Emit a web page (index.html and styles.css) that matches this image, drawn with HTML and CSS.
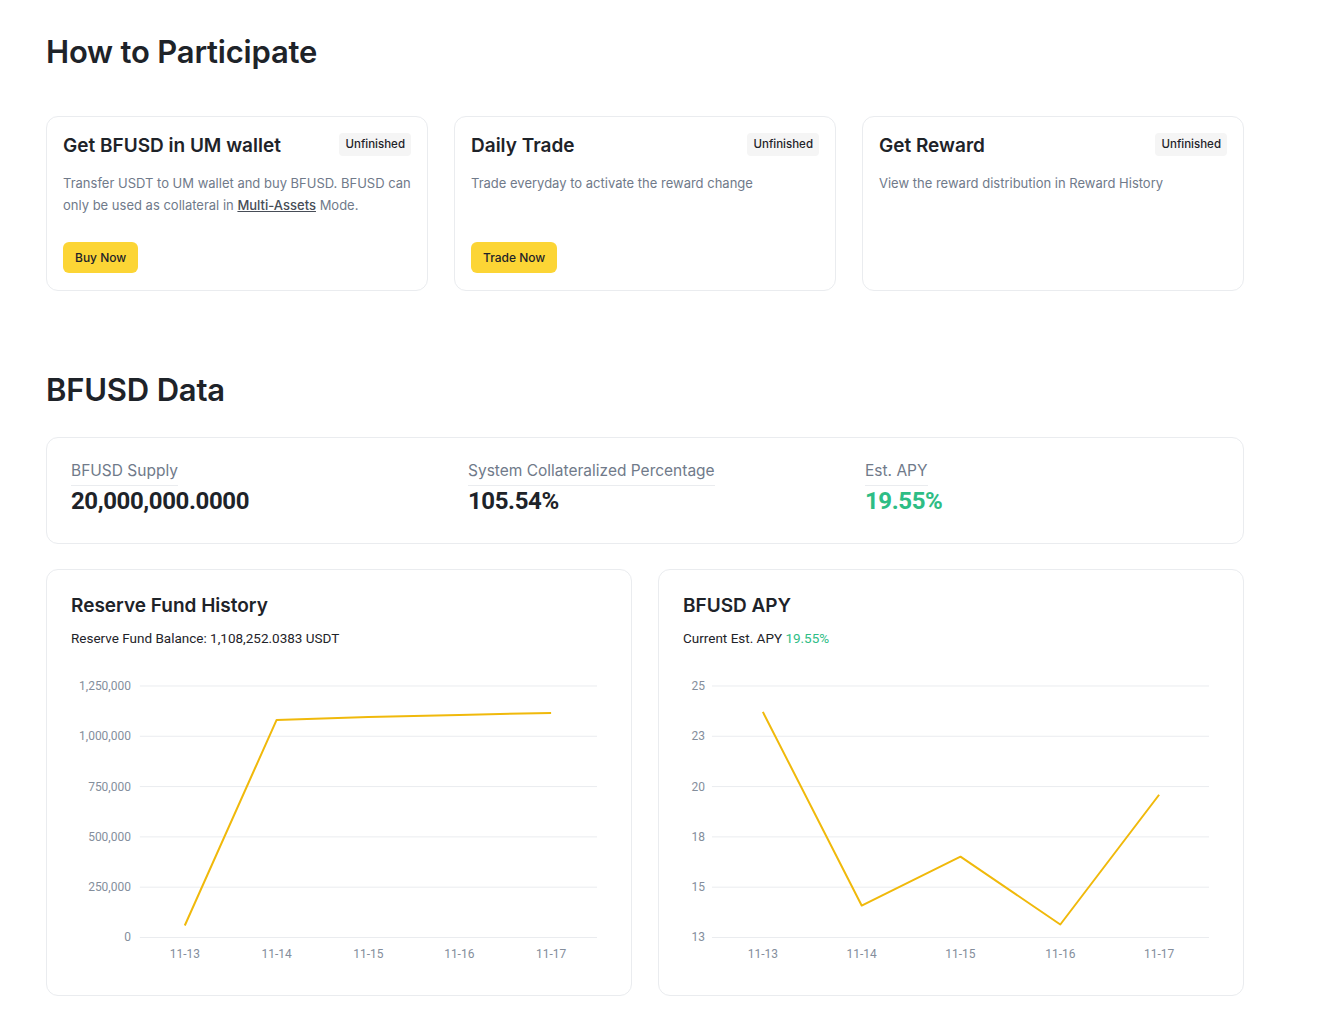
FILE: index.html
```html
<!DOCTYPE html>
<html>
  <head>
    <meta charset="utf-8" />
    <title>BFUSD</title>
    <link rel="stylesheet" href="styles.css">
  </head>
  <body>
    <div class="page">
      <!-- How to participate -->
      <h2 class="section-title">How to Participate</h2>

      <div class="steps">
        <div class="step">
          <div class="step-head">
            <h3>Get BFUSD in UM wallet</h3>
            <span class="badge">Unfinished</span>
          </div>
          <p class="step-text">
            Transfer USDT to UM wallet and buy BFUSD. BFUSD can<br />only be used as collateral in
            <a href="#">Multi-Assets</a> Mode.
          </p>
          <button class="btn">Buy Now</button>
        </div>

        <div class="step">
          <div class="step-head">
            <h3>Daily Trade</h3>
            <span class="badge">Unfinished</span>
          </div>
          <p class="step-text">Trade everyday to activate the reward change</p>
          <button class="btn">Trade Now</button>
        </div>

        <div class="step">
          <div class="step-head">
            <h3>Get Reward</h3>
            <span class="badge">Unfinished</span>
          </div>
          <p class="step-text">View the reward distribution in Reward History</p>
        </div>
      </div>

      <!-- BFUSD data -->
      <h2 class="section-title data-title">BFUSD Data</h2>

      <div class="stats">
        <div class="stat">
          <span class="stat-label">BFUSD Supply</span>
          <div class="stat-value">20,000,000.0000</div>
        </div>
        <div class="stat">
          <span class="stat-label">System Collateralized Percentage</span>
          <div class="stat-value">105.54%</div>
        </div>
        <div class="stat">
          <span class="stat-label">Est. APY</span>
          <div class="stat-value green">19.55%</div>
        </div>
      </div>

      <div class="charts">
        <div class="chart-card">
          <h3>Reserve Fund History</h3>
          <div class="chart-sub">Reserve Fund Balance: 1,108,252.0383 USDT</div>
          <svg class="chart" viewBox="0 0 537 300">
            <g class="grid">
              <line x1="69" y1="18" x2="527" y2="18" />
              <line x1="69" y1="68.4" x2="527" y2="68.4" />
              <line x1="69" y1="118.8" x2="527" y2="118.8" />
              <line x1="69" y1="169.2" x2="527" y2="169.2" />
              <line x1="69" y1="219.6" x2="527" y2="219.6" />
              <line x1="69" y1="270" x2="527" y2="270" />
            </g>
            <g class="y-axis" text-anchor="end">
              <text x="60" y="22">1,250,000</text>
              <text x="60" y="72.4">1,000,000</text>
              <text x="60" y="122.8">750,000</text>
              <text x="60" y="173.2">500,000</text>
              <text x="60" y="223.6">250,000</text>
              <text x="60" y="274">0</text>
            </g>
            <g class="x-axis" text-anchor="middle">
              <text x="114" y="291">11-13</text>
              <text x="206" y="291">11-14</text>
              <text x="298" y="291">11-15</text>
              <text x="389" y="291">11-16</text>
              <text x="481" y="291">11-17</text>
            </g>
            <polyline class="line" points="114,258 206,52 298,49 389,47 481,45" />
          </svg>
        </div>

        <div class="chart-card">
          <h3>BFUSD APY</h3>
          <div class="chart-sub">Current Est. APY <span class="green">19.55%</span></div>
          <svg class="chart" viewBox="0 0 537 300">
            <g class="grid">
              <line x1="29" y1="18" x2="527" y2="18" />
              <line x1="29" y1="68.4" x2="527" y2="68.4" />
              <line x1="29" y1="118.8" x2="527" y2="118.8" />
              <line x1="29" y1="169.2" x2="527" y2="169.2" />
              <line x1="29" y1="219.6" x2="527" y2="219.6" />
              <line x1="29" y1="270" x2="527" y2="270" />
            </g>
            <g class="y-axis" text-anchor="end">
              <text x="22" y="22">25</text>
              <text x="22" y="72.4">23</text>
              <text x="22" y="122.8">20</text>
              <text x="22" y="173.2">18</text>
              <text x="22" y="223.6">15</text>
              <text x="22" y="274">13</text>
            </g>
            <g class="x-axis" text-anchor="middle">
              <text x="80" y="291">11-13</text>
              <text x="179" y="291">11-14</text>
              <text x="278" y="291">11-15</text>
              <text x="378" y="291">11-16</text>
              <text x="477" y="291">11-17</text>
            </g>
            <polyline class="line" points="80,44 179,238 278,189 378,257 477,127" />
          </svg>
        </div>
      </div>
    </div>
  </body>
</html>
```

FILE: styles.css
```css
/* Page */

html,
body {
  margin: 0;
  padding: 0;
  background: #fff;
  color: #1e2329;
  font-family: "Inter", "Noto Sans", sans-serif;
}

.page {
  width: 1198px;
  padding: 32px 0 40px 46px;
}

.section-title {
  margin: 0;
  font-size: 31px;
  line-height: 40px;
  font-weight: 600;
  letter-spacing: -0.2px;
}

.green {
  color: #2ebd85;
}

/* Steps */

.steps {
  display: grid;
  grid-template-columns: repeat(3, 1fr);
  gap: 26px;
  margin-top: 44px;
}

.step {
  display: flex;
  flex-direction: column;
  align-items: flex-start;
  height: 175px;
  box-sizing: border-box;
  padding: 15px 16px 17px;
  border: 1px solid #eaecef;
  border-radius: 12px;
}

.step-head {
  display: flex;
  justify-content: space-between;
  align-items: flex-start;
  width: 100%;
}

.step-head h3 {
  margin: 0;
  font-size: 19px;
  line-height: 28px;
  font-weight: 600;
}

.badge {
  margin-top: 1px;
  padding: 0 6px;
  height: 23px;
  line-height: 22px;
  font-size: 11.5px;
  font-weight: 500;
  border-radius: 4px;
  background: #f5f5f5;
  color: #1e2329;
}

.step-text {
  margin: 12px 0 0;
  font-size: 13px;
  line-height: 22px;
  color: #707a8a;
}

.step-text a {
  color: #474d57;
  font-weight: 500;
}

.btn {
  margin-top: auto;
  height: 31px;
  padding: 0 12px;
  border: none;
  border-radius: 6px;
  background: #fcd535;
  color: #1e2329;
  font-family: inherit;
  font-size: 12px;
  font-weight: 500;
}

/* Data */

.data-title {
  margin-top: 79px;
}

.stats {
  display: grid;
  grid-template-columns: repeat(3, 397px);
  margin-top: 27px;
  padding: 22px 24px 28px;
  border: 1px solid #eaecef;
  border-radius: 12px;
}

.stat-label {
  display: inline-block;
  padding-bottom: 3px;
  border-bottom: 1px solid #eaecef;
  font-size: 15.5px;
  line-height: 22px;
  color: #707a8a;
}

.stat-value {
  margin-top: 1px;
  font-family: "Roboto", sans-serif;
  font-size: 24px;
  line-height: 28px;
  font-weight: 700;
  letter-spacing: -0.4px;
}

/* Charts */

.charts {
  display: grid;
  grid-template-columns: 1fr 1fr;
  gap: 26px;
  margin-top: 25px;
}

.chart-card {
  padding: 23px 24px 28px;
  border: 1px solid #eaecef;
  border-radius: 12px;
}

.chart-card h3 {
  margin: 0;
  font-size: 19px;
  line-height: 26px;
  font-weight: 600;
}

.chart-sub {
  margin-top: 9px;
  font-family: "Roboto", sans-serif;
  font-size: 13.5px;
  line-height: 20px;
  color: #1e2329;
}

.chart {
  display: block;
  width: 100%;
  margin-top: 20px;
}

.grid line {
  stroke: #eaecef;
  stroke-width: 1;
}

.y-axis,
.x-axis {
  font-family: "Roboto", sans-serif;
  font-size: 12px;
  fill: #848e9c;
}

.line {
  fill: none;
  stroke: #f0b90b;
  stroke-width: 2;
  stroke-linejoin: round;
}
```
